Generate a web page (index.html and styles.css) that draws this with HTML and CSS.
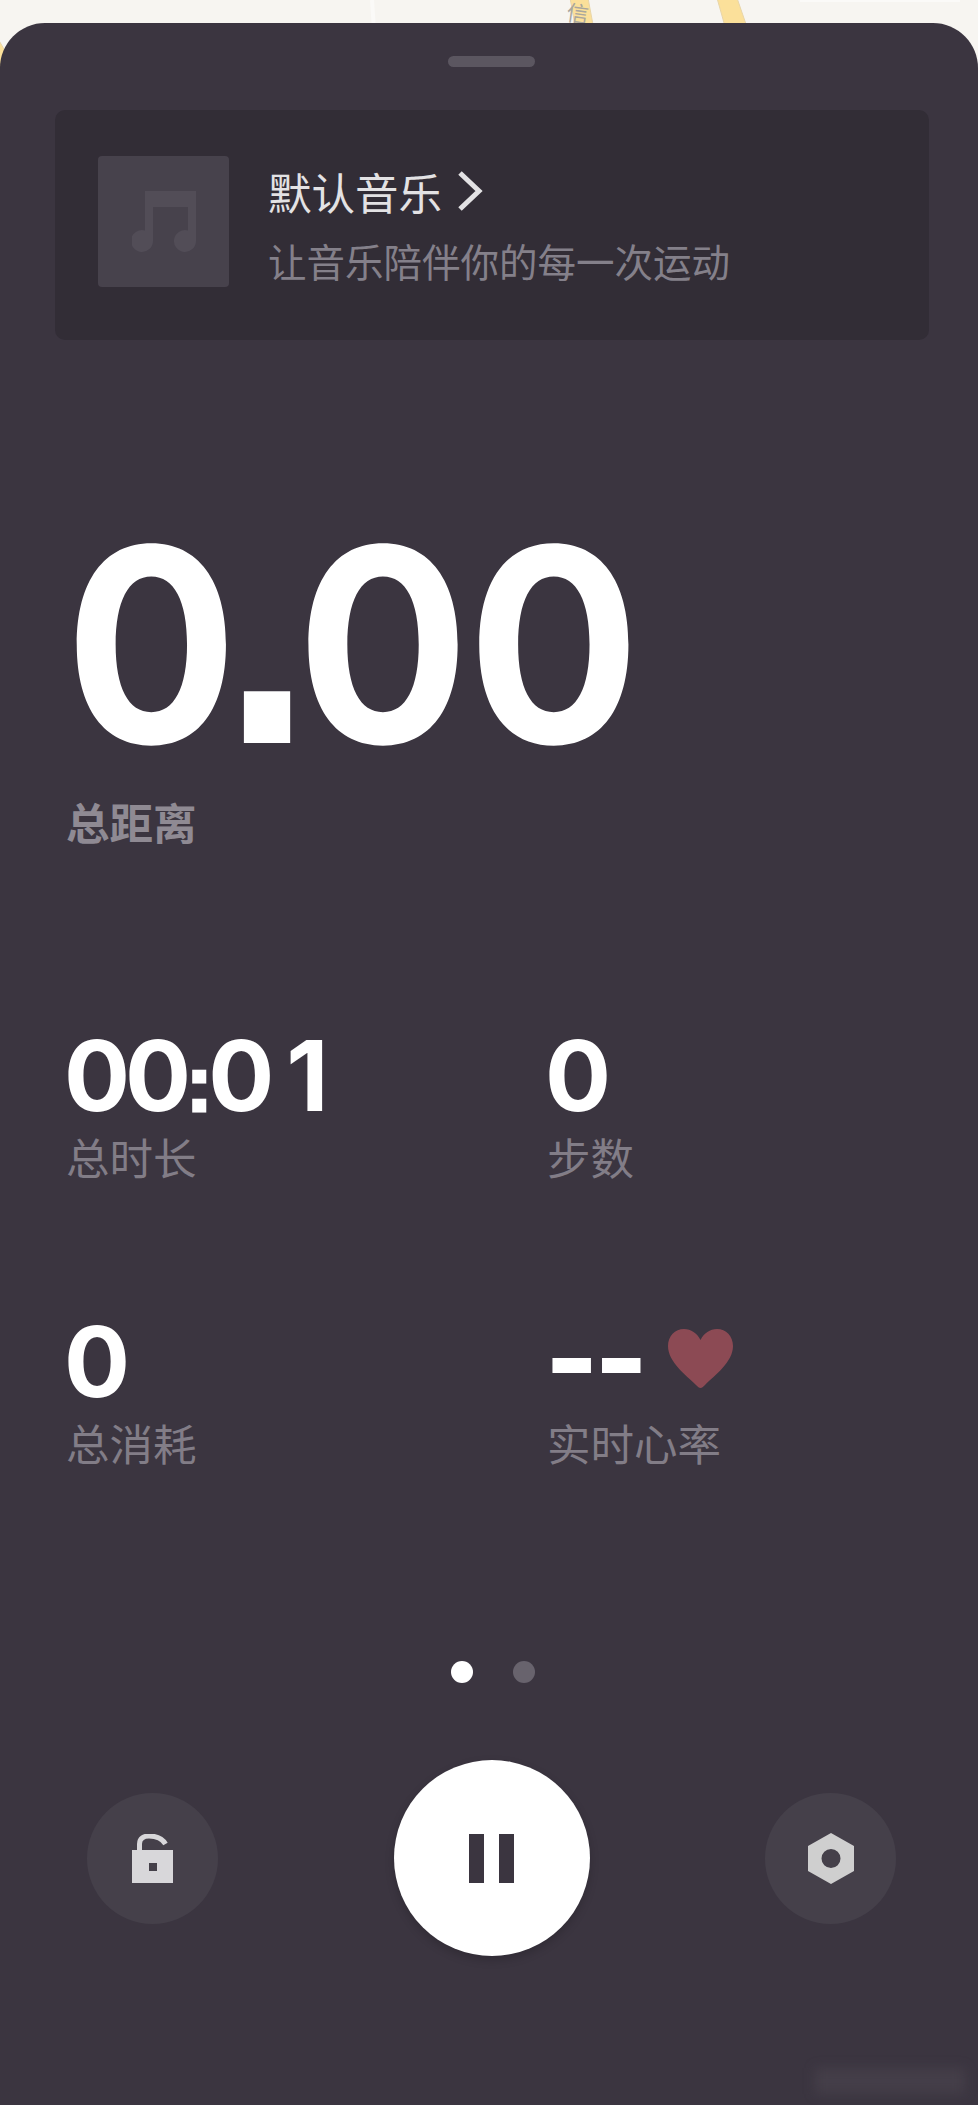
FILE: index.html
```html
<!DOCTYPE html>
<html lang="zh-CN">
<head>
<meta charset="utf-8">
<title>运动</title>
<link rel="stylesheet" href="styles.css">
</head>
<body>
<div class="map" aria-hidden="true">
  <svg class="map-svg" width="978" height="80" viewBox="0 0 978 80">
    <path class="road" d="M-6 32 L8 56 L0 80 L-6 80 Z"/>
    <path class="road" d="M570 -2 L588 -2 L594 30 L576 30 Z"/>
    <path class="road" d="M717 -2 L737 -2 L748 30 L726 30 Z"/>
    <path class="street" d="M372 0 L374 30 M800 0 L960 0"/>
  </svg>
  <span class="map-label">信</span>
</div>
<main class="sheet">
  <div class="handle"></div>
  <section class="music">
    <div class="cover">
      <svg width="64" height="62" viewBox="0 0 64 62">
        <path class="note" d="M13 0H64V50A11 11 0 1 1 56 39.4V16H21V50A11 11 0 1 1 13 39.4Z"/>
      </svg>
    </div>
    <div class="music-text">
      <div class="music-title">默认音乐
        <svg class="chevron" width="26" height="40" viewBox="0 0 26 40"><path d="M3 2 L22 20 L3 38"/></svg>
      </div>
      <div class="music-sub">让音乐陪伴你的每一次运动</div>
    </div>
  </section>
  <section class="total">
    <div class="big-value">0<span class="big-point">.</span>00</div>
    <div class="big-label">总距离</div>
  </section>
  <section class="stats">
    <div class="stat">
      <div class="stat-value">00<span class="colon">:</span>0<span class="one">1</span></div>
      <div class="stat-label">总时长</div>
    </div>
    <div class="stat">
      <div class="stat-value">0</div>
      <div class="stat-label">步数</div>
    </div>
    <div class="stat">
      <div class="stat-value">0</div>
      <div class="stat-label">总消耗</div>
    </div>
    <div class="stat">
      <div class="stat-value heart-row"><span class="dashes">--</span>
        <svg class="heart" width="65" height="59" viewBox="0 0 65 59"><path d="M32.500 59C31 59 30 58 28 56C18 46 0 33 0 17C0 7 7 0 16 0C23 0 29 4 32.500 11C36 4 42 0 49 0C58 0 65 7 65 17C65 33 47 46 37 56C35 58 34 59 32.500 59Z"/></svg>
      </div>
      <div class="stat-label">实时心率</div>
    </div>
  </section>
  <div class="pager">
    <span class="dot dot-on"></span>
    <span class="dot"></span>
  </div>
  <section class="controls">
    <button class="round side" type="button" aria-label="解锁">
      <svg width="41" height="49" viewBox="0 0 41 49"><path class="glyph" fill-rule="evenodd" d="M0 16H41V49H0ZM17 29V37H25V29Z"/><path class="shackle" d="M7.500 17V10C7.500 4 12 2 17 2C24 2 30 4 33.500 10"/></svg>
    </button>
    <button class="round main" type="button" aria-label="暂停">
      <span class="bar"></span><span class="bar"></span>
    </button>
    <button class="round side" type="button" aria-label="设置">
      <svg width="46" height="51" viewBox="0 0 46 51"><path class="glyph-hex" fill-rule="evenodd" d="M23 0L46 13V38L23 51L0 38V13ZM23 16A9.500 9.500 0 1 0 23 35A9.500 9.500 0 1 0 23 16Z"/></svg>
    </button>
  </section>
</main>
<div class="watermark" aria-hidden="true"></div>
</body>
</html>
```

FILE: styles.css
```css
* { box-sizing: border-box; }
html, body { margin: 0; padding: 0; }
body {
  position: relative;
  width: 978px;
  height: 2105px;
  overflow: hidden;
  background: #f7f5f1;
  font-family: "Noto Sans CJK SC", "Noto Sans", sans-serif;
}
.map { position: absolute; inset: 0 0 auto 0; height: 80px; }
.map-svg { display: block; filter: blur(.6px); }
.road { fill: #fbe09a; stroke: #e8d5a8; stroke-width: 1; }
.street { stroke: #fbfaf8; stroke-width: 4; fill: none; }
.map-label {
  position: absolute;
  left: 567px;
  top: 0;
  font-size: 22px;
  line-height: 24px;
  color: #a9a69d;
  transform: rotate(8deg);
}
.sheet {
  position: relative;
  margin-top: 23px;
  height: 2082px;
  background: #3b3540;
  border-radius: 45px 45px 0 0;
  display: flex;
  flex-direction: column;
}
.handle {
  width: 87px;
  height: 11px;
  margin: 33px 0 0 448px;
  border-radius: 6px;
  background: #5b5660;
}
.music {
  display: flex;
  gap: 39px;
  height: 230px;
  margin: 43px 49px 0 55px;
  padding: 46px 43px;
  background: #322d36;
  border-radius: 10px;
}
.cover {
  width: 131px;
  height: 131px;
  border-radius: 4px;
  background: #47424c;
  display: flex;
  align-items: center;
  justify-content: center;
}
.note { fill: #524d57; }
.music-title {
  display: flex;
  align-items: center;
  gap: 15px;
  height: 70px;
  font-size: 43.500px;
  color: #e3e2e4;
}
.chevron { fill: none; stroke: #e3e2e4; stroke-width: 5; }
.music-sub {
  height: 68px;
  line-height: 68px;
  font-size: 38.500px;
  color: #84808a;
}
.total { margin-top: 164px; padding-left: 66px; }
.big-value {
  font-family: Inter, "Liberation Sans", sans-serif;
  font-size: 271px;
  font-weight: 700;
  line-height: 280px;
  letter-spacing: -2px;
  color: #fff;
  margin-left: -1.500px;
  transform: scaleX(.945);
  transform-origin: left center;
}
.big-point {
  font-family: "Liberation Sans", sans-serif;
  font-size: 347px;
  line-height: 0;
  letter-spacing: -17px;
  margin-left: -15px;
}
.big-label {
  margin-top: 8px;
  font-size: 43.500px;
  line-height: 60px;
  font-weight: 700;
  color: #8f8a93;
}
.stats {
  display: grid;
  grid-template-columns: 481px 1fr;
  grid-auto-rows: 286px;
  margin-top: 178px;
  padding-left: 66px;
}
.stat-value {
  font-family: Inter, "Liberation Sans", sans-serif;
  font-size: 98px;
  line-height: 84px;
  font-weight: 700;
  height: 84px;
  margin: 3.500px 0 0 -2px;
  letter-spacing: -5px;
  color: #fff;
}
.colon {
  font-family: "Liberation Sans", sans-serif;
  font-size: 78px;
  line-height: 0;
  letter-spacing: -4px;
  margin-left: 0;
  -webkit-text-stroke: 3px #fff;
}
.one { margin-left: 17px; }
.stat-label {
  margin-top: 9.500px;
  font-size: 43.500px;
  line-height: 60px;
  color: #827d87;
}
.heart-row { display: flex; align-items: center; }
.dashes {
  font-size: 110px;
  letter-spacing: -2px;
  margin: 0 0 7px 1px;
  -webkit-text-stroke: 2px #fff;
}
.heart { fill: #8c4a54; margin: 0 0 7px 23px; }
.pager {
  display: flex;
  gap: 40px;
  margin: 59px 0 0 451px;
}
.dot { width: 22px; height: 22px; border-radius: 50%; background: #68636d; }
.dot-on { background: #fff; }
.controls {
  display: flex;
  align-items: center;
  gap: 175.500px;
  margin-top: 77px;
  padding-left: 87px;
}
.round {
  border: 0;
  padding: 0;
  border-radius: 50%;
  display: flex;
  align-items: center;
  justify-content: center;
  flex: none;
}
.side { width: 131px; height: 131px; background: #45404a; }
.main {
  width: 196px;
  height: 196px;
  gap: 15px;
  background: #fff;
  box-shadow: 0 4px 10px rgba(0, 0, 0, .18);
}
.bar { width: 15px; height: 49px; background: #3b3540; }
.glyph { fill: #d8d7da; }
.shackle { fill: none; stroke: #d8d7da; stroke-width: 5; }
.glyph-hex { fill: #cfcfcf; }
.watermark {
  position: absolute;
  left: 815px;
  top: 2068px;
  width: 150px;
  height: 26px;
  background: rgba(85, 80, 90, .35);
  filter: blur(6px);
}
```
